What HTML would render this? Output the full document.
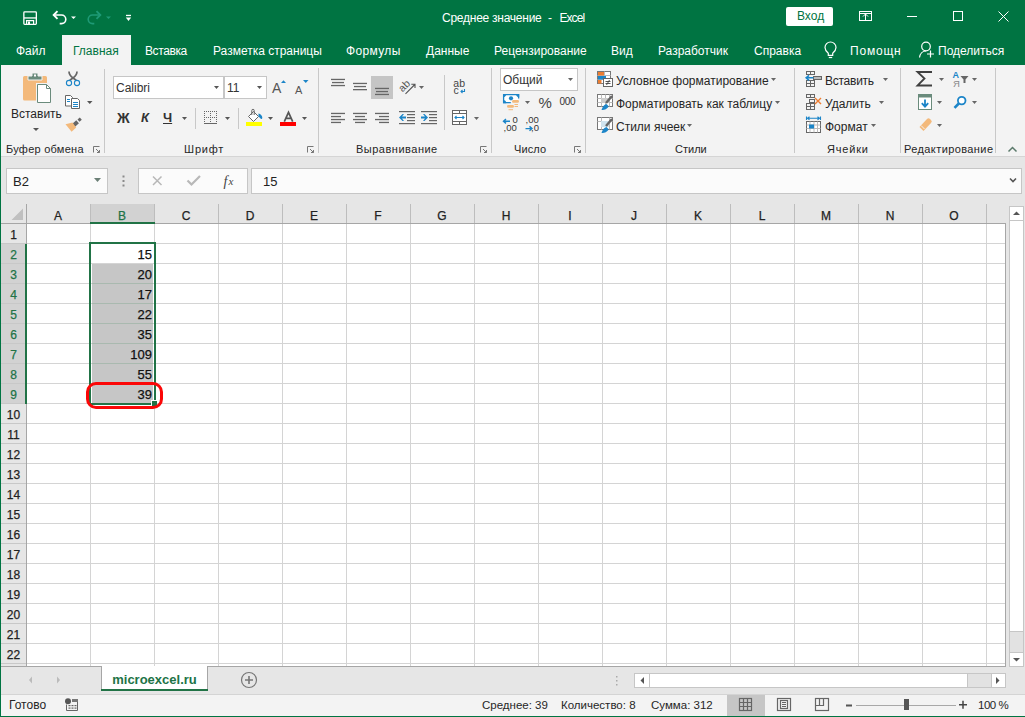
<!DOCTYPE html>
<html><head><meta charset="utf-8">
<style>
*{box-sizing:border-box;margin:0;padding:0}
html,body{width:1025px;height:717px;overflow:hidden;background:#e6e6e6;font-family:"Liberation Sans",sans-serif;}
.a{position:absolute}
.t{position:absolute;font-size:12px;line-height:14px;white-space:nowrap;color:#262626}
.hd{-webkit-text-stroke:0.25px currentColor}
svg{position:absolute;overflow:visible}
#title{left:0;top:0;width:1025px;height:65px;background:#007442}
#ribbon{left:1px;top:65px;width:1024px;height:92px;background:#f3f3f3;border-bottom:1px solid #d5d5d5}
.sep{position:absolute;width:1px;background:#c8c8c8}
.w{color:#fff}
.dd{position:absolute;width:0;height:0;border-left:3px solid transparent;border-right:3px solid transparent;border-top:3px solid #444}
.box{position:absolute;background:#fff;border:1px solid #c6c6c6}
</style></head><body>
<div id="title" class="a"></div>
<!-- QAT -->
<svg style="left:0;top:0" width="140" height="35">
  <g fill="none" stroke="#fff">
    <rect x="23.85" y="11.85" width="12.5" height="12.5" rx="0.8" stroke-width="1.3"/>
    <path d="M24 17.95h12.3" stroke-width="1.3"/>
    <path d="M26.6 24.5v-3.9h7v3.9" stroke-width="1.2"/>
  </g>
  <rect x="28" y="21.5" width="2" height="3" fill="#fff"/>
  <g fill="none" stroke="#fff" stroke-width="1.6">
    <path d="M53.5 15h8a4.3 4.3 0 0 1 0 8.6h-1.8"/>
    <path d="M57.5 11.2l-3.8 3.8 3.8 3.8" stroke-width="1.9"/>
  </g>
  <path d="M71 16.5h5l-2.5 2.5z" fill="#fff"/>
  <g fill="none" stroke="#1e9a76" stroke-width="1.6">
    <path d="M100.5 15h-8a4.3 4.3 0 0 0 0 8.6h1.8"/>
    <path d="M96.5 11.2l3.8 3.8-3.8 3.8" stroke-width="1.9"/>
  </g>
  <path d="M106 16.5h5l-2.5 2.5z" fill="#1e9a76"/>
  <rect x="126" y="14.8" width="5" height="1.3" fill="#fff"/>
  <path d="M125.8 17.6h5.4l-2.7 3.5z" fill="#fff"/>
</svg>
<div class="t w" style="left:442px;top:11px;letter-spacing:-0.25px">Среднее значение</div><div class="t w" style="left:548px;top:11px">-</div><div class="t w" style="left:559.5px;top:11px;letter-spacing:-0.95px">Excel</div>
<div class="a" style="left:786px;top:7px;width:47px;height:19px;background:#fff;border-radius:2px"></div>
<div class="t" style="left:797px;top:9px;color:#007442">Вход</div>
<svg style="left:850px;top:0" width="175" height="35">
  <g fill="none" stroke="#fff" stroke-width="1">
    <rect x="9.5" y="11.5" width="12" height="9"/>
    <path d="M9.5 13.5h12"/>
    <path d="M15.5 20.5v-6.5M13 16.5l2.5-2.5 2.5 2.5"/>
    <path d="M57 16.5h10"/>
    <rect x="103.5" y="11.5" width="9" height="9"/>
    <path d="M148.5 11.5l10 10M158.5 11.5l-10 10"/>
  </g>
</svg>
<!-- tabs -->
<div class="a" style="left:62px;top:35px;width:69px;height:30px;background:#f3f3f3"></div>
<div class="t w" style="left:16px;top:44px">Файл</div>
<div class="t" style="left:73px;top:44px;color:#007442">Главная</div>
<div class="t w" style="left:145px;top:44px;letter-spacing:-0.4px">Вставка</div>
<div class="t w" style="left:213px;top:44px">Разметка страницы</div>
<div class="t w" style="left:346px;top:44px;letter-spacing:0.35px">Формулы</div>
<div class="t w" style="left:426px;top:44px">Данные</div>
<div class="t w" style="left:494px;top:44px">Рецензирование</div>
<div class="t w" style="left:611px;top:44px">Вид</div>
<div class="t w" style="left:658px;top:44px">Разработчик</div>
<div class="t w" style="left:754px;top:44px">Справка</div>
<div class="t w" style="left:850px;top:44px;letter-spacing:0.8px">Помощн</div>
<div class="t w" style="left:938px;top:44px">Поделиться</div>
<svg style="left:815px;top:35px" width="130" height="30">
  <g fill="none" stroke="#fff" stroke-width="1.2">
    <path d="M13.3 18.3c-1.8-1.5-3.3-3.2-3.3-5.8a5.5 5.5 0 0 1 11 0c0 2.6-1.5 4.3-3.3 5.8v2h-4.4z"/>
    <path d="M13.8 22.5h3.4"/>
    <circle cx="111" cy="11.5" r="4.3"/>
    <path d="M104.5 22.5c0.5-3.5 3-6.5 6.5-6.5"/>
    <path d="M115.5 15.5v7M112 19h7"/>
  </g>
</svg>

<!-- FORMULA BAR -->
<div class="box" style="left:6px;top:168px;width:102px;height:26px;background:#fbfbfb"></div>
<div class="t" style="left:13px;top:175px;font-size:13px;color:#222">B2</div>
<svg style="left:0;top:0" width="1025" height="230">
  <path d="M94 178h7l-3.5 4z" fill="#6b7f76"/>
  <g fill="#8a8a8a"><rect x="122.5" y="175.5" width="2" height="2"/><rect x="122.5" y="180" width="2" height="2"/><rect x="122.5" y="184.5" width="2" height="2"/></g>
  <rect x="138.5" y="168.5" width="109" height="25" fill="#fbfbfb" stroke="#c6c6c6"/>
  <path d="M153 176.5l8.5 8.5M161.5 176.5l-8.5 8.5" stroke="#b8b8b8" stroke-width="1.5" fill="none"/>
  <path d="M187.5 180.5l4 4 8.5-8.5" stroke="#b8b8b8" stroke-width="2.2" fill="none"/>
  <text x="223.5" y="185.5" font-family="Liberation Serif" font-style="italic" font-size="14" fill="#444">f</text>
  <text x="228.5" y="185" font-family="Liberation Serif" font-style="italic" font-size="11" fill="#444">x</text>
  <rect x="251.5" y="168.5" width="770" height="25" fill="#fbfbfb" stroke="#c6c6c6"/>
  <path d="M1010 178.5l3 3 3-3" stroke="#555" stroke-width="1.6" fill="none"/>
</svg>
<div class="t" style="left:263px;top:175px;font-size:13px;color:#222">15</div>

<div class="a" style="left:1px;top:204px;width:1004px;height:20px;background:#e6e6e6"></div>
<div class="a" style="left:1px;top:224px;width:26px;height:442px;background:#e6e6e6"></div>
<div class="a" style="left:27px;top:224px;width:978px;height:442px;background:#fff"></div>
<div class="a" style="left:90px;top:204px;width:65px;height:19px;background:#d2d2d2"></div>
<div class="a" style="left:1px;top:244px;width:25px;height:160px;background:#d2d2d2"></div>
<div class="a" style="left:92px;top:264px;width:61px;height:139px;background:#c6c6c6"></div>
<svg style="left:0;top:0" width="1025" height="717">
<rect x="90" y="224" width="1" height="442" fill="#d4d4d4"/>
<rect x="90" y="204" width="1" height="19" fill="#bdbdbd"/>
<rect x="154" y="224" width="1" height="442" fill="#d4d4d4"/>
<rect x="154" y="204" width="1" height="19" fill="#bdbdbd"/>
<rect x="218" y="224" width="1" height="442" fill="#d4d4d4"/>
<rect x="218" y="204" width="1" height="19" fill="#bdbdbd"/>
<rect x="282" y="224" width="1" height="442" fill="#d4d4d4"/>
<rect x="282" y="204" width="1" height="19" fill="#bdbdbd"/>
<rect x="346" y="224" width="1" height="442" fill="#d4d4d4"/>
<rect x="346" y="204" width="1" height="19" fill="#bdbdbd"/>
<rect x="410" y="224" width="1" height="442" fill="#d4d4d4"/>
<rect x="410" y="204" width="1" height="19" fill="#bdbdbd"/>
<rect x="474" y="224" width="1" height="442" fill="#d4d4d4"/>
<rect x="474" y="204" width="1" height="19" fill="#bdbdbd"/>
<rect x="538" y="224" width="1" height="442" fill="#d4d4d4"/>
<rect x="538" y="204" width="1" height="19" fill="#bdbdbd"/>
<rect x="602" y="224" width="1" height="442" fill="#d4d4d4"/>
<rect x="602" y="204" width="1" height="19" fill="#bdbdbd"/>
<rect x="666" y="224" width="1" height="442" fill="#d4d4d4"/>
<rect x="666" y="204" width="1" height="19" fill="#bdbdbd"/>
<rect x="730" y="224" width="1" height="442" fill="#d4d4d4"/>
<rect x="730" y="204" width="1" height="19" fill="#bdbdbd"/>
<rect x="794" y="224" width="1" height="442" fill="#d4d4d4"/>
<rect x="794" y="204" width="1" height="19" fill="#bdbdbd"/>
<rect x="858" y="224" width="1" height="442" fill="#d4d4d4"/>
<rect x="858" y="204" width="1" height="19" fill="#bdbdbd"/>
<rect x="922" y="224" width="1" height="442" fill="#d4d4d4"/>
<rect x="922" y="204" width="1" height="19" fill="#bdbdbd"/>
<rect x="986" y="224" width="1" height="442" fill="#d4d4d4"/>
<rect x="986" y="204" width="1" height="19" fill="#bdbdbd"/>
<rect x="1050" y="224" width="1" height="442" fill="#d4d4d4"/>
<rect x="1050" y="204" width="1" height="19" fill="#bdbdbd"/>
<rect x="27" y="243" width="978" height="1" fill="#d4d4d4"/>
<rect x="1" y="243" width="26" height="1" fill="#c8c8c8"/>
<rect x="27" y="263" width="978" height="1" fill="#d4d4d4"/>
<rect x="1" y="263" width="26" height="1" fill="#c8c8c8"/>
<rect x="27" y="283" width="978" height="1" fill="#d4d4d4"/>
<rect x="1" y="283" width="26" height="1" fill="#c8c8c8"/>
<rect x="27" y="303" width="978" height="1" fill="#d4d4d4"/>
<rect x="1" y="303" width="26" height="1" fill="#c8c8c8"/>
<rect x="27" y="323" width="978" height="1" fill="#d4d4d4"/>
<rect x="1" y="323" width="26" height="1" fill="#c8c8c8"/>
<rect x="27" y="343" width="978" height="1" fill="#d4d4d4"/>
<rect x="1" y="343" width="26" height="1" fill="#c8c8c8"/>
<rect x="27" y="363" width="978" height="1" fill="#d4d4d4"/>
<rect x="1" y="363" width="26" height="1" fill="#c8c8c8"/>
<rect x="27" y="383" width="978" height="1" fill="#d4d4d4"/>
<rect x="1" y="383" width="26" height="1" fill="#c8c8c8"/>
<rect x="27" y="403" width="978" height="1" fill="#d4d4d4"/>
<rect x="1" y="403" width="26" height="1" fill="#c8c8c8"/>
<rect x="27" y="423" width="978" height="1" fill="#d4d4d4"/>
<rect x="1" y="423" width="26" height="1" fill="#c8c8c8"/>
<rect x="27" y="443" width="978" height="1" fill="#d4d4d4"/>
<rect x="1" y="443" width="26" height="1" fill="#c8c8c8"/>
<rect x="27" y="463" width="978" height="1" fill="#d4d4d4"/>
<rect x="1" y="463" width="26" height="1" fill="#c8c8c8"/>
<rect x="27" y="483" width="978" height="1" fill="#d4d4d4"/>
<rect x="1" y="483" width="26" height="1" fill="#c8c8c8"/>
<rect x="27" y="503" width="978" height="1" fill="#d4d4d4"/>
<rect x="1" y="503" width="26" height="1" fill="#c8c8c8"/>
<rect x="27" y="523" width="978" height="1" fill="#d4d4d4"/>
<rect x="1" y="523" width="26" height="1" fill="#c8c8c8"/>
<rect x="27" y="543" width="978" height="1" fill="#d4d4d4"/>
<rect x="1" y="543" width="26" height="1" fill="#c8c8c8"/>
<rect x="27" y="563" width="978" height="1" fill="#d4d4d4"/>
<rect x="1" y="563" width="26" height="1" fill="#c8c8c8"/>
<rect x="27" y="583" width="978" height="1" fill="#d4d4d4"/>
<rect x="1" y="583" width="26" height="1" fill="#c8c8c8"/>
<rect x="27" y="603" width="978" height="1" fill="#d4d4d4"/>
<rect x="1" y="603" width="26" height="1" fill="#c8c8c8"/>
<rect x="27" y="623" width="978" height="1" fill="#d4d4d4"/>
<rect x="1" y="623" width="26" height="1" fill="#c8c8c8"/>
<rect x="27" y="643" width="978" height="1" fill="#d4d4d4"/>
<rect x="1" y="643" width="26" height="1" fill="#c8c8c8"/>
<rect x="27" y="663" width="978" height="1" fill="#d4d4d4"/>
<rect x="1" y="663" width="26" height="1" fill="#c8c8c8"/>
<rect x="92" y="283" width="61" height="1" fill="#a9b9af"/>
<rect x="92" y="303" width="61" height="1" fill="#a9b9af"/>
<rect x="92" y="323" width="61" height="1" fill="#a9b9af"/>
<rect x="92" y="343" width="61" height="1" fill="#a9b9af"/>
<rect x="92" y="363" width="61" height="1" fill="#a9b9af"/>
<rect x="92" y="383" width="61" height="1" fill="#a9b9af"/>
<rect x="1" y="223" width="1004" height="1" fill="#a6a6a6"/>
<rect x="26" y="204" width="1" height="462" fill="#a6a6a6"/>
<rect x="1005" y="223" width="1" height="444" fill="#a6a6a6"/>
<rect x="1" y="666" width="1005" height="1" fill="#a6a6a6"/>
<path d="M23 208.5v11.5h-11.5z" fill="#c0c0c0"/>
<rect x="90" y="222" width="65" height="2" fill="#217346"/>
<rect x="25" y="244" width="2" height="160" fill="#217346"/>
<path d="M90 243h65v161h-65z" fill="none" stroke="#217346" stroke-width="2"/>
<rect x="152" y="401" width="5" height="5" fill="#217346"/>
<rect x="151" y="400" width="1" height="7" fill="#fff"/><rect x="151" y="400" width="7" height="1" fill="#fff"/>
<rect x="87.5" y="383.5" width="74" height="24" rx="8.5" ry="8.5" fill="none" stroke="#fb0707" stroke-width="3"/>
</svg>
<div class="t hd" style="left:26px;top:208.5px;width:64px;text-align:center;color:#222">A</div>
<div class="t hd" style="left:90px;top:208.5px;width:64px;text-align:center;color:#217346">B</div>
<div class="t hd" style="left:154px;top:208.5px;width:64px;text-align:center;color:#222">C</div>
<div class="t hd" style="left:218px;top:208.5px;width:64px;text-align:center;color:#222">D</div>
<div class="t hd" style="left:282px;top:208.5px;width:64px;text-align:center;color:#222">E</div>
<div class="t hd" style="left:346px;top:208.5px;width:64px;text-align:center;color:#222">F</div>
<div class="t hd" style="left:410px;top:208.5px;width:64px;text-align:center;color:#222">G</div>
<div class="t hd" style="left:474px;top:208.5px;width:64px;text-align:center;color:#222">H</div>
<div class="t hd" style="left:538px;top:208.5px;width:64px;text-align:center;color:#222">I</div>
<div class="t hd" style="left:602px;top:208.5px;width:64px;text-align:center;color:#222">J</div>
<div class="t hd" style="left:666px;top:208.5px;width:64px;text-align:center;color:#222">K</div>
<div class="t hd" style="left:730px;top:208.5px;width:64px;text-align:center;color:#222">L</div>
<div class="t hd" style="left:794px;top:208.5px;width:64px;text-align:center;color:#222">M</div>
<div class="t hd" style="left:858px;top:208.5px;width:64px;text-align:center;color:#222">N</div>
<div class="t hd" style="left:922px;top:208.5px;width:64px;text-align:center;color:#222">O</div>
<div class="t hd" style="left:1px;top:228px;width:25px;text-align:center;color:#222">1</div>
<div class="t hd" style="left:1px;top:248px;width:25px;text-align:center;color:#217346">2</div>
<div class="t hd" style="left:1px;top:268px;width:25px;text-align:center;color:#217346">3</div>
<div class="t hd" style="left:1px;top:288px;width:25px;text-align:center;color:#217346">4</div>
<div class="t hd" style="left:1px;top:308px;width:25px;text-align:center;color:#217346">5</div>
<div class="t hd" style="left:1px;top:328px;width:25px;text-align:center;color:#217346">6</div>
<div class="t hd" style="left:1px;top:348px;width:25px;text-align:center;color:#217346">7</div>
<div class="t hd" style="left:1px;top:368px;width:25px;text-align:center;color:#217346">8</div>
<div class="t hd" style="left:1px;top:388px;width:25px;text-align:center;color:#217346">9</div>
<div class="t hd" style="left:1px;top:408px;width:25px;text-align:center;color:#222">10</div>
<div class="t hd" style="left:1px;top:428px;width:25px;text-align:center;color:#222">11</div>
<div class="t hd" style="left:1px;top:448px;width:25px;text-align:center;color:#222">12</div>
<div class="t hd" style="left:1px;top:468px;width:25px;text-align:center;color:#222">13</div>
<div class="t hd" style="left:1px;top:488px;width:25px;text-align:center;color:#222">14</div>
<div class="t hd" style="left:1px;top:508px;width:25px;text-align:center;color:#222">15</div>
<div class="t hd" style="left:1px;top:528px;width:25px;text-align:center;color:#222">16</div>
<div class="t hd" style="left:1px;top:548px;width:25px;text-align:center;color:#222">17</div>
<div class="t hd" style="left:1px;top:568px;width:25px;text-align:center;color:#222">18</div>
<div class="t hd" style="left:1px;top:588px;width:25px;text-align:center;color:#222">19</div>
<div class="t hd" style="left:1px;top:608px;width:25px;text-align:center;color:#222">20</div>
<div class="t hd" style="left:1px;top:628px;width:25px;text-align:center;color:#222">21</div>
<div class="t hd" style="left:1px;top:648px;width:25px;text-align:center;color:#222">22</div>
<div class="t hd" style="left:90px;top:248px;width:62px;text-align:right;font-size:13px;color:#111">15</div>
<div class="t hd" style="left:90px;top:268px;width:62px;text-align:right;font-size:13px;color:#111">20</div>
<div class="t hd" style="left:90px;top:288px;width:62px;text-align:right;font-size:13px;color:#111">17</div>
<div class="t hd" style="left:90px;top:308px;width:62px;text-align:right;font-size:13px;color:#111">22</div>
<div class="t hd" style="left:90px;top:328px;width:62px;text-align:right;font-size:13px;color:#111">35</div>
<div class="t hd" style="left:90px;top:348px;width:62px;text-align:right;font-size:13px;color:#111">109</div>
<div class="t hd" style="left:90px;top:368px;width:62px;text-align:right;font-size:13px;color:#111">55</div>
<div class="t hd" style="left:90px;top:388px;width:62px;text-align:right;font-size:13px;color:#111">39</div>

<!-- TAB BAR -->
<div class="a" style="left:101px;top:666px;width:107px;height:24px;background:#fff;border-left:1px solid #a6a6a6;border-right:1px solid #a6a6a6"></div>
<div class="a" style="left:101px;top:689px;width:107px;height:2px;background:#217346"></div>
<div class="t" style="left:101px;top:672.5px;width:107px;text-align:center;font-size:13px;font-weight:bold;color:#217346">microexcel.ru</div>
<svg style="left:0;top:0" width="1025" height="717">
  <path d="M32 676.5v7l-3-3.5z" fill="#bbb"/>
  <path d="M57 676.5v7l3-3.5z" fill="#bbb"/>
  <circle cx="249" cy="680" r="7.5" fill="none" stroke="#777" stroke-width="1.2"/>
  <path d="M249 676v8M245 680h8" stroke="#777" stroke-width="1.6"/>
  <g fill="#aaa"><rect x="616" y="676" width="1.5" height="1.5"/><rect x="616" y="680" width="1.5" height="1.5"/><rect x="616" y="684" width="1.5" height="1.5"/></g>
  <rect x="634.5" y="673.5" width="371" height="14" fill="#fff" stroke="#c6c6c6"/>
  <rect x="649" y="674" width="1" height="13" fill="#c6c6c6"/>
  <rect x="968" y="674" width="23" height="13" fill="#e2e2e2"/><rect x="967" y="674" width="1" height="13" fill="#c6c6c6"/>
  <rect x="991" y="674" width="1" height="13" fill="#c6c6c6"/>
  <path d="M644 677v7l-3.5-3.5z" fill="#555"/>
  <path d="M996 677v7l3.5-3.5z" fill="#555"/>
  <!-- v scrollbar -->
  <rect x="1009.5" y="206.5" width="14" height="460" fill="#fff" stroke="#c6c6c6"/>
  <rect x="1010" y="220" width="13" height="1" fill="#c6c6c6"/>
  <rect x="1010" y="631" width="13" height="21" fill="#e2e2e2"/>
  <rect x="1010" y="631" width="13" height="1" fill="#c6c6c6"/>
  <rect x="1010" y="652" width="13" height="1" fill="#c6c6c6"/>
  <path d="M1013 215h7l-3.5-3.5z" fill="#555"/>
  <path d="M1013 658h7l-3.5 3.5z" fill="#555"/>
</svg>
<!-- STATUS BAR -->
<div class="a" style="left:1px;top:694px;width:1024px;height:22px;background:#f3f3f3;border-top:1px solid #d4d4d4"></div>
<div class="t" style="left:9px;top:698px">Готово</div>
<svg style="left:0;top:0" width="1025" height="717">
  <circle cx="68" cy="701.2" r="3" fill="#555"/>
  <rect x="72" y="699" width="6" height="3" fill="#777"/>
  <path d="M66.5 704.5v6h11v-8.5" stroke="#666" stroke-width="1" fill="none"/>
  <g fill="#666">
    <rect x="68.5" y="705" width="2" height="1.2"/><rect x="71.5" y="705" width="2" height="1.2"/><rect x="74.5" y="705" width="2" height="1.2"/>
    <rect x="68.5" y="707.5" width="2" height="1.2"/><rect x="71.5" y="707.5" width="2" height="1.2"/><rect x="74.5" y="707.5" width="2" height="1.2"/>
  </g>
  <rect x="727" y="695" width="38" height="21" fill="#c6c6c6"/>
  <g fill="none" stroke="#666" stroke-width="1.2">
    <rect x="739.5" y="698.5" width="12" height="12"/>
    <path d="M739.5 702.5h12M739.5 706.5h12M743.5 698.5v12M747.5 698.5v12"/>
    <rect x="777.5" y="698.5" width="13" height="12"/>
    <rect x="780.5" y="700.5" width="7" height="8"/>
    <path d="M782 702.5h4M782 704.5h4M782 706.5h4" stroke-width="1"/>
    <rect x="815.5" y="698.5" width="13" height="12"/>
    <path d="M815.5 705.5h8v-7M819.5 698.5v7"/>
  </g>
  <rect x="846" y="704.5" width="6" height="2" fill="#555"/>
  <rect x="856" y="705" width="100" height="1" fill="#a8a8a8"/>
  <rect x="904" y="699" width="5" height="11" fill="#555"/>
  <path d="M959 704.7h8M963 700.7v8" stroke="#444" stroke-width="1.5"/>
</svg>
<div class="t" style="left:482px;top:698px;font-size:11.5px">Среднее: 39</div>
<div class="t" style="left:561px;top:698px;font-size:11.5px">Количество: 8</div>
<div class="t" style="left:651px;top:698px;font-size:11.5px">Сумма: 312</div>
<div class="t" style="left:978px;top:698px;font-size:11.5px;letter-spacing:-0.5px">100 %</div>

<!-- ribbon -->
<div id="ribbon" class="a"></div>
<div class="a" style="left:0;top:65px;width:1px;height:652px;background:#007442"></div>
<div class="a" style="left:0;top:716px;width:1025px;height:1px;background:#007442"></div>

<!-- RIBBON CONTENT -->
<svg style="left:0;top:0" width="1025" height="160">
  <!-- separators -->
  <g fill="#c8c8c8">
    <rect x="104" y="69" width="1" height="84"/>
    <rect x="318" y="68" width="1" height="85"/>
    <rect x="491" y="68" width="1" height="85"/>
    <rect x="585" y="68" width="1" height="85"/>
    <rect x="794" y="68" width="1" height="85"/>
    <rect x="900" y="68" width="1" height="85"/>
    <rect x="995" y="68" width="1" height="85"/>
    <rect x="195" y="108" width="1" height="21"/>
    <rect x="238" y="108" width="1" height="21"/>
    <rect x="444" y="75" width="1" height="55"/>
  </g>
  <!-- font boxes -->
  <rect x="113.5" y="76.5" width="110" height="22" fill="#fff" stroke="#c6c6c6"/>
  <rect x="224.5" y="76.5" width="42" height="22" fill="#fff" stroke="#c6c6c6"/>
  <rect x="500.5" y="68.5" width="77" height="22" fill="#fff" stroke="#c6c6c6"/>
  <!-- dropdown arrows -->
  <g fill="#555">
    <path d="M33 128h6l-3 3z"/>
    <path d="M87 101h5.5l-2.75 3z"/>
    <path d="M214 86h5l-2.5 3z"/>
    <path d="M257 86h5l-2.5 3z"/>
    <path d="M182 117h5l-2.5 3z"/>
    <path d="M225 117h5l-2.5 3z"/>
    <path d="M268 117h5l-2.5 3z"/>
    <path d="M302 117h5l-2.5 3z"/>
  </g>
  <!-- paste -->
  <path d="M23 77.5a1.5 1.5 0 0 1 1.5-1.5h3.5v4h14v-4h3.5a1.5 1.5 0 0 1 1.5 1.5v5.5h-11v17.5h-11.5a1.5 1.5 0 0 1-1.5-1.5z" fill="#f3b97b"/>
  <path d="M28 76h4v-3h6v3h4v4h-14z" fill="#6a8b7c" stroke="#f3f3f3" stroke-width="1"/>
  <rect x="34" y="74.5" width="2" height="2" fill="#fff"/>
  <path d="M37.5 84.5h9l4 4v14h-13z" fill="#fff" stroke="#6a8b7c" stroke-width="1"/>
  <path d="M46.5 84.5v4h4" fill="none" stroke="#6a8b7c" stroke-width="1"/>
  <!-- scissors -->
  <path d="M69 71.5c0 3 2 5 4 6.5s3.8 2.5 3.8 3M77 71.5c0 3-2 5-4 6.5s-3.8 2.5-3.8 3" stroke="#666" stroke-width="1.7" fill="none"/>
  <circle cx="69" cy="83" r="2.6" fill="#f3f3f3" stroke="#1c85c8" stroke-width="1.1"/>
  <circle cx="77" cy="83" r="2.6" fill="#f3f3f3" stroke="#1c85c8" stroke-width="1.1"/>
  <!-- copy -->
  <path d="M65.5 95.5h5l2 2v8.5h-7z" fill="#fff" stroke="#666" stroke-width="1"/>
  <path d="M71.5 98.5h6l2 2v8h-8z" fill="#fff" stroke="#666" stroke-width="1"/>
  <g fill="#1c85c8"><rect x="67" y="99" width="3" height="1"/><rect x="67" y="101" width="3" height="1"/><rect x="73" y="102" width="5" height="1"/><rect x="73" y="104" width="5" height="1"/><rect x="73" y="106" width="5" height="1"/></g>
  <!-- format painter -->
  <path d="M80.8 118.6l-2.3 2.1" stroke="#666" stroke-width="3" fill="none"/>
  <path d="M77.6 121.7l-5 4.5" stroke="#666" stroke-width="4" fill="none"/>
  <path d="M65.5 124.3l7-1.7 3.7 4.8-4.6 4.4z" fill="#f3b97b"/>
  <!-- launchers -->
  <g fill="none" stroke="#777" stroke-width="1">
    <path d="M93.5 152.5v-6h6"/><path d="M96 149l3.5 3.5M99.5 150v2.5h-2.5"/>
    <path d="M307.5 152.5v-6h6"/><path d="M310 149l3.5 3.5M313.5 150v2.5h-2.5"/>
    <path d="M480.5 152.5v-6h6"/><path d="M483 149l3.5 3.5M486.5 150v2.5h-2.5"/>
    <path d="M574.5 152.5v-6h6"/><path d="M577 149l3.5 3.5M580.5 150v2.5h-2.5"/>
  </g>
  <!-- grow/shrink -->
  <path d="M281 83l2.5-2.7 2.5 2.7z" fill="#1c85c8"/>
  <path d="M303 80h5.5l-2.75 3z" fill="#1c85c8"/>
  <!-- borders -->
  <g fill="#666">
    <path d="M204 111h1v1h-1zM206 111h1v1h-1zM208 111h1v1h-1zM210 111h1v1h-1zM212 111h1v1h-1zM214 111h1v1h-1zM216 111h1v1h-1z"/>
    <path d="M204 117h1v1h-1zM206 117h1v1h-1zM208 117h1v1h-1zM210 117h1v1h-1zM212 117h1v1h-1zM214 117h1v1h-1zM216 117h1v1h-1z"/>
    <path d="M204 113h1v1h-1zM204 115h1v1h-1zM204 119h1v1h-1zM204 121h1v1h-1zM210 113h1v1h-1zM210 115h1v1h-1zM210 119h1v1h-1zM210 121h1v1h-1zM216 113h1v1h-1zM216 115h1v1h-1zM216 119h1v1h-1zM216 121h1v1h-1z"/>
    <rect x="204" y="123" width="13" height="1"/>
  </g>
  <!-- fill color -->
  <path d="M248.5 116.5l5-5 5 5-5 5z" fill="#fff" stroke="#666" stroke-width="1"/>
  <path d="M251.8 115v-4.5a1.2 1.2 0 0 1 2.4 0v4.5" fill="none" stroke="#666" stroke-width="1"/>
  <path d="M258.5 113.5c2 0.3 3.8 2 3.8 4.2 0 0.8-0.5 1.3-1.2 1.3l-2.6-2.5z" fill="#1c85c8"/>
  <rect x="246" y="122" width="16" height="4" fill="#ffff00"/>
  <rect x="280" y="122" width="16" height="4" fill="#ff0000"/>
  <path d="M284.3 121.6L288.5 112.3L292.7 121.6M285.9 118.3h5.2" stroke="#555" stroke-width="1.7" fill="none"/>
</svg>
<div class="t" style="left:11px;top:107px">Вставить</div>
<div class="t" style="left:6px;top:142px;font-size:11px;letter-spacing:0.25px">Буфер обмена</div>
<div class="t" style="left:184px;top:142px;font-size:11px;letter-spacing:0.8px">Шрифт</div>
<div class="t" style="left:116px;top:81px;color:#333">Calibri</div>
<div class="t" style="left:227px;top:81px;color:#333">11</div>
<div class="t" style="left:272px;top:81px;font-size:14px;color:#555">A</div>
<div class="t" style="left:295px;top:83px;font-size:11px;color:#555">A</div>
<div class="t" style="left:117px;top:110.5px;font-size:14px;font-weight:bold;color:#333">Ж</div>
<div class="t" style="left:141px;top:111px;font-size:13px;font-weight:bold;font-style:italic;color:#333">К</div>
<div class="t" style="left:163px;top:111px;font-size:13px;font-weight:bold;color:#333;text-decoration:underline">Ч</div>


<svg style="left:0;top:0" width="1025" height="160">
  <g fill="#666">
    <!-- align top -->
    <rect x="331" y="78.8" width="14" height="1.3"/><rect x="332" y="81.9" width="12" height="1.3"/><rect x="331" y="84.9" width="14" height="1.3"/>
    <!-- align middle -->
    <rect x="353" y="82.8" width="14" height="1.3"/><rect x="354" y="85.9" width="12" height="1.3"/><rect x="353" y="89" width="14" height="1.3"/>
  </g>
  <rect x="371" y="76" width="22" height="23" fill="#c5c5c5"/>
  <g fill="#666">
    <rect x="375" y="87.8" width="14" height="1.3"/><rect x="376" y="90.9" width="12" height="1.3"/><rect x="375" y="93.8" width="14" height="1.3"/>
    <!-- left -->
    <rect x="331" y="112.8" width="14" height="1.3"/><rect x="331" y="115.9" width="10" height="1.3"/><rect x="331" y="118.9" width="14" height="1.3"/><rect x="331" y="121.8" width="10" height="1.3"/>
    <!-- center -->
    <rect x="353" y="112.8" width="14" height="1.3"/><rect x="355" y="115.9" width="10" height="1.3"/><rect x="353" y="118.9" width="14" height="1.3"/><rect x="355" y="121.8" width="10" height="1.3"/>
    <!-- right -->
    <rect x="375" y="112.8" width="14" height="1.3"/><rect x="379" y="115.9" width="10" height="1.3"/><rect x="375" y="118.9" width="14" height="1.3"/><rect x="379" y="121.8" width="10" height="1.3"/>
    <!-- indents -->
    <rect x="399" y="111" width="16" height="1.2"/><rect x="407" y="114" width="8" height="1.2"/><rect x="407" y="117" width="8" height="1.2"/><rect x="407" y="120" width="8" height="1.2"/><rect x="399" y="123" width="16" height="1.2"/>
    <rect x="421" y="111" width="16" height="1.2"/><rect x="429" y="114" width="8" height="1.2"/><rect x="429" y="117" width="8" height="1.2"/><rect x="429" y="120" width="8" height="1.2"/><rect x="421" y="123" width="16" height="1.2"/>
    <!-- dd -->
    <path d="M419 86h5l-2.5 3z"/>
    <path d="M474 117h5l-2.5 3z"/>
    <path d="M568 78h5l-2.5 3z"/>
    <path d="M525 101h5l-2.5 3z"/>
    <path d="M771 78h5l-2.5 3z"/>
    <path d="M775 101h5l-2.5 3z"/>
    <path d="M687 124h5l-2.5 3z"/>
    <path d="M883 78h5l-2.5 3z"/>
    <path d="M879 101h5l-2.5 3z"/>
    <path d="M871 124h5l-2.5 3z"/>
    <path d="M939 78h5l-2.5 3z"/>
    <path d="M972 78h5l-2.5 3z"/>
    <path d="M937 101h5l-2.5 3z"/>
    <path d="M972 101h5l-2.5 3z"/>
    <path d="M937 124h5l-2.5 3z"/>
  </g>
  <g fill="#1c85c8">
    <path d="M399 117.5l3.5-3.5h1.5l-2 2.5h4v2h-4l2 2.5h-1.5z"/>
    <path d="M428 117.5l-3.5-3.5h-1.5l2 2.5h-4v2h4l-2 2.5h1.5z"/>
  </g>
  <!-- orientation -->
  <text x="0" y="0" transform="translate(402.5,92.5) rotate(-45)" font-family="Liberation Sans" font-size="10.5" fill="#555">ab</text>
  <path d="M405.5 93.8l9.3-9.3M411.3 84.3h3.7v3.7" stroke="#555" stroke-width="1.1" fill="none"/>
  <!-- wrap -->
  <text x="453.3" y="86.6" font-family="Liberation Sans" font-size="10.5" fill="#444">ab</text>
  <text x="453.5" y="93.6" font-family="Liberation Sans" font-size="10.5" fill="#444">c</text>
  <path d="M464.5 89v2.5h-3M462.5 90l-1.5 1.5 1.5 1.5" stroke="#1c85c8" stroke-width="1.1" fill="none"/>
  <!-- merge -->
  <rect x="452.5" y="110.5" width="14" height="14" fill="#fff" stroke="#666"/>
  <path d="M452.5 113.5h14M452.5 121.5h14M459.5 110.5v3M459.5 121.5v3" stroke="#666" fill="none"/>
  <path d="M455 117.5h9M456.5 116l-1.5 1.5 1.5 1.5M462.5 116l1.5 1.5-1.5 1.5" stroke="#1c85c8" stroke-width="1.1" fill="none"/>
  <!-- currency -->
  <rect x="504" y="95" width="14" height="7" fill="#fff"/>
  <path d="M510.8 102.6H503.6V94.6H518.6V98.6" fill="none" stroke="#1c85c8" stroke-width="1.3"/>
  <g fill="#1c85c8">
    <path d="M503 94h3.2a3 3 0 0 1-3.2 3.2z"/>
    <path d="M519.2 94h-3.2a3 3 0 0 0 3.2 3.2z"/>
    <path d="M503 103.2h3.2a3 3 0 0 0-3.2-3.2z"/>
    <circle cx="511" cy="98.3" r="2.1"/>
  </g>
  <g fill="#f3b97b">
    <rect x="512" y="100" width="7" height="2.8" rx="1.4"/>
    <rect x="514.5" y="104" width="3.5" height="1"/><rect x="514.5" y="106" width="3.5" height="1"/>
    <rect x="507" y="105" width="7" height="2.8" rx="1.4"/>
    <rect x="508.5" y="109.2" width="4.5" height="1"/>
  </g>
  <text x="538.5" y="108" font-family="Liberation Sans" font-size="15" fill="#444">%</text>
  <text x="559.5" y="105" font-family="Liberation Sans" font-size="10" fill="#333" letter-spacing="-0.3">000</text>
  <!-- decimals -->
  <text x="512.5" y="123.3" font-family="Liberation Sans" font-size="9.5" fill="#333">0</text>
  <text x="503.5" y="131" font-family="Liberation Sans" font-size="9.5" fill="#333">,00</text>
  <path d="M503.5 121.2h6.5M506 119l-2.5 2.2 2.5 2.2" stroke="#1c85c8" stroke-width="1.4" fill="none"/>
  <text x="525.5" y="123.3" font-family="Liberation Sans" font-size="9.5" fill="#333">,00</text>
  <text x="531" y="131" font-family="Liberation Sans" font-size="9.5" fill="#333">,0</text>
  <path d="M525.5 128.6h6.5M529.5 126.4l2.5 2.2-2.5 2.2" stroke="#1c85c8" stroke-width="1.4" fill="none"/>
  <!-- CF icon -->
  <rect x="597.5" y="71.5" width="13" height="12" fill="#fff" stroke="#777"/>
  <path d="M597.5 75.5h13M597.5 79.5h13M604.5 71.5v12" stroke="#bbb" fill="none"/>
  <rect x="598" y="72" width="6" height="3.5" fill="#ed7d31"/>
  <rect x="598" y="76" width="8" height="3.5" fill="#1c85c8"/>
  <rect x="598" y="80" width="3.5" height="3.5" fill="#ed7d31"/>
  <rect x="603.5" y="78.5" width="9" height="8" fill="#fff" stroke="#666"/>
  <path d="M605.5 81.5h5M605.5 83.5h5M609.5 80l-3 5" stroke="#444" stroke-width="0.9" fill="none"/>
  <!-- FAT icon -->
  <rect x="597.5" y="94.5" width="15" height="12" fill="#fff" stroke="#777"/>
  <path d="M597.5 98.5h15M597.5 102.5h15M601.5 94.5v12M605.5 94.5v12M609.5 94.5v12" stroke="#bbb" fill="none"/>
  <rect x="601" y="98" width="8" height="5" fill="#ccc"/>
  <path d="M612 96l-6 7" stroke="#666" stroke-width="2.4" fill="none"/>
  <path d="M601.5 110c1-3 2.5-5.5 5-6l2 2c-0.5 2.5-3.5 4-7 4z" fill="#1c85c8"/>
  <!-- cell styles icon -->
  <rect x="597.5" y="117.5" width="15" height="12" fill="#fff" stroke="#777"/>
  <path d="M597.5 121.5h15M601.5 117.5v12M609.5 117.5v12" stroke="#bbb" fill="none"/>
  <rect x="601" y="121" width="8" height="6" fill="#cfe3ee"/>
  <path d="M612 119l-6 7" stroke="#666" stroke-width="2.4" fill="none"/>
  <path d="M601.5 133c1-3 2.5-5.5 5-6l2 2c-0.5 2.5-3.5 4-7 4z" fill="#1c85c8"/>
  <!-- insert cells -->
  <g fill="none" stroke="#666" stroke-width="1">
    <rect x="806.5" y="71.5" width="8" height="3"/><path d="M810.5 71.5v3"/>
    <rect x="806.5" y="80.5" width="8" height="6"/><path d="M806.5 83.5h8M810.5 80.5v6"/>
    <rect x="813.5" y="76.5" width="8" height="3"/>
  </g>
  <rect x="814" y="77" width="7" height="2" fill="#bbb"/>
  <path d="M806 77.8h7.5M809 75.3l-2.8 2.5 2.8 2.5" stroke="#1c85c8" stroke-width="1.6" fill="none"/>
  <!-- delete cells -->
  <g fill="none" stroke="#666" stroke-width="1">
    <rect x="806.5" y="94.5" width="8" height="3"/><path d="M810.5 94.5v3"/>
    <rect x="806.5" y="103.5" width="8" height="6"/><path d="M806.5 106.5h8M810.5 103.5v6"/>
    <rect x="809.5" y="99.5" width="5" height="3"/>
  </g>
  <path d="M815 98l6 6M821 98l-6 6" stroke="#ed7d31" stroke-width="1.4" fill="none"/>
  <!-- format cells -->
  <path d="M806.5 116.5v3.5M820.5 116.5v3.5M807.5 118.3h12M809.5 116.8l-2 1.5 2 1.5M817.5 116.8l2 1.5-2 1.5" stroke="#1c85c8" stroke-width="1.1" fill="none"/>
  <rect x="806.5" y="121.5" width="14" height="11" fill="#fff" stroke="#666"/>
  <path d="M806.5 125h14M806.5 128.5h14M810 121.5v11M814 121.5v11M817.5 121.5v11" stroke="#bbb" fill="none"/>
  <rect x="809" y="124.5" width="5" height="4" fill="#1c85c8"/>
  <!-- sigma -->
  <path d="M932 72h-14.5l7 6.5-7 7h14.5" stroke="#404040" stroke-width="1.8" fill="none"/>
  <!-- sort -->
  <text x="952.5" y="78" font-family="Liberation Sans" font-size="9" font-weight="bold" fill="#1c85c8">A</text>
  <text x="953" y="87" font-family="Liberation Sans" font-size="9.5" fill="#888">Я</text>
  <path d="M960.5 76h8l-3 3.5v3.5h-2v-3.5z" fill="#666"/>
  <!-- fill -->
  <rect x="918.5" y="94.5" width="13" height="15" fill="#fff" stroke="#6a8b7c"/>
  <rect x="918" y="94" width="14" height="3.5" fill="#6a8b7c"/>
  <path d="M925 99.5v7M921.8 103.2l3.2 3.5 3.2-3.5" stroke="#1c85c8" stroke-width="1.8" fill="none"/>
  <!-- find -->
  <circle cx="961.7" cy="100.6" r="3.8" fill="#fff" stroke="#1c85c8" stroke-width="1.8"/>
  <path d="M958.8 103.5l-4.3 4.3" stroke="#1c85c8" stroke-width="2.6" fill="none"/>
  <!-- clear -->
  <path d="M919.5 127l7.5-8a2 2 0 0 1 3 0l1 1a2 2 0 0 1 0 3l-7.5 8z" fill="#f3b97b"/>
  <path d="M921 125.5l3.5 3.5" stroke="#f3f3f3" stroke-width="1"/>
  <!-- collapse caret -->
  <path d="M1008.5 151.5l4-4 4 4" stroke="#5b7a6b" stroke-width="1.5" fill="none"/>
</svg>
<div class="t" style="left:356px;top:142px;font-size:11px;letter-spacing:0.5px">Выравнивание</div>
<div class="t" style="left:503px;top:73px;color:#333">Общий</div>
<div class="t" style="left:514px;top:142px;font-size:11px;letter-spacing:0.1px">Число</div>
<div class="t" style="left:616px;top:74px">Условное форматирование</div>
<div class="t" style="left:616px;top:97px">Форматировать как таблицу</div>
<div class="t" style="left:616px;top:120px">Стили ячеек</div>
<div class="t" style="left:675px;top:142px;font-size:11px;letter-spacing:0px">Стили</div>
<div class="t" style="left:825px;top:74px;letter-spacing:-0.25px">Вставить</div>
<div class="t" style="left:825px;top:97px">Удалить</div>
<div class="t" style="left:825px;top:120px">Формат</div>
<div class="t" style="left:827px;top:142px;font-size:11px;letter-spacing:0.8px">Ячейки</div>
<div class="t" style="left:904px;top:142px;font-size:11px;letter-spacing:0.4px">Редактирование</div>
</body></html>
